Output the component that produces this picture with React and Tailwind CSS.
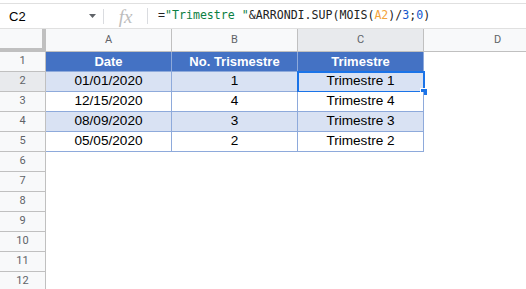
import React from "react";

const rows = [
  ["01/01/2020", "1", "Trimestre 1"],
  ["12/15/2020", "4", "Trimestre 4"],
  ["08/09/2020", "3", "Trimestre 3"],
  ["05/05/2020", "2", "Trimestre 2"],
];

function RowHeader({ n, selected }) {
  return (
    <div
      className={`w-[46px] shrink-0 h-full flex items-center justify-center border-r border-b border-[#c0c0c0] text-[11px] text-[#5f6368] font-['Roboto',sans-serif] ${
        selected ? "bg-[#e8eaed]" : "bg-[#f8f9fa]"
      }`}
    >
      {n}
    </div>
  );
}

export default function App() {
  return (
    <div className="w-[526px] h-[289px] overflow-hidden bg-white font-['Liberation_Sans',Arial,sans-serif] text-black">
      {/* formula bar */}
      <div className="mt-[3px] border-t border-b border-[#e0e0e0] h-[26px] flex items-center">
        <div className="w-[103px] shrink-0 flex items-center pl-[9px] pr-[7px]">
          <span className="text-[13px] leading-none">C2</span>
          <svg className="ml-auto" width="7" height="4" viewBox="0 0 7 4">
            <path d="M0 0 L7 0 L3.5 4 Z" fill="#5f6368" />
          </svg>
        </div>
        <div className="w-px h-[15px] bg-[#dadce0]" />
        <div className="w-[43px] shrink-0 flex items-center justify-center">
          <span className="font-['Liberation_Serif',serif] italic text-[19px] leading-none text-[#bdbdbd]">fx</span>
        </div>
        <div className="w-px h-[16px] bg-[#dadce0]" />
        <div className="pl-[10px] font-['DejaVu_Sans_Mono',monospace] text-[11.6px] leading-none whitespace-pre text-[#222]">
          <span>=</span>
          <span className="text-[#0b8043]">"Trimestre "</span>
          <span>&amp;ARRONDI.SUP(MOIS(</span>
          <span className="text-[#f4a43c]">A2</span>
          <span>)/</span>
          <span className="text-[#1155cc]">3</span>
          <span>;</span>
          <span className="text-[#1155cc]">0</span>
          <span>)</span>
        </div>
      </div>

      {/* column headers */}
      <div className="flex h-[23px] font-['Roboto',sans-serif] text-[11px] text-[#5f6368]">
        <div className="w-[46px] shrink-0 bg-[#f8f9fa] border-r-[4px] border-b-[4px] border-[#c0c0c0]" />
        <div className="w-[126px] shrink-0 bg-[#f8f9fa] border-r border-b border-[#c0c0c0] flex items-center justify-center">A</div>
        <div className="w-[126px] shrink-0 bg-[#f8f9fa] border-r border-b border-[#c0c0c0] flex items-center justify-center">B</div>
        <div className="w-[126px] shrink-0 bg-[#e8eaed] border-r border-b border-[#c0c0c0] flex items-center justify-center">C</div>
        <div className="w-[148px] shrink-0 bg-[#f8f9fa] border-r border-b border-[#c0c0c0] flex items-center justify-center">D</div>
      </div>

      {/* row 1 header */}
      <div className="flex h-[20px]">
        <RowHeader n={1} />
        {["Date", "No. Trismestre", "Trimestre"].map((t) => (
          <div
            key={t}
            className="w-[126px] shrink-0 bg-[#4472c4] border-r border-b border-[#8eaadb] flex items-center justify-center text-white font-bold text-[13px]"
          >
            {t}
          </div>
        ))}
      </div>

      {rows.map((r, i) => {
        const shaded = i % 2 === 0;
        return (
          <div key={i} className="flex h-[20px]">
            <RowHeader n={i + 2} selected={i === 0} />
            {r.map((c, j) => (
              <div
                key={j}
                className={`relative w-[126px] shrink-0 border-r border-b border-[#8eaadb] flex items-center justify-center text-[13.6px] ${
                  shaded ? "bg-[#d9e2f3]" : "bg-white"
                }`}
              >
                {c}
                {i === 0 && j === 2 && (
                  <div className="absolute top-[-1px] left-[-1px] right-[-2px] bottom-[-2px] border-2 border-[#1a73e8]">
                    <div className="absolute right-[-5px] bottom-[-5px] w-[8px] h-[8px] bg-[#1a73e8] border border-white" />
                  </div>
                )}
              </div>
            ))}
          </div>
        );
      })}

      {[6, 7, 8, 9, 10, 11, 12].map((n) => (
        <div key={n} className="flex h-[20px]">
          <RowHeader n={n} />
        </div>
      ))}
    </div>
  );
}
